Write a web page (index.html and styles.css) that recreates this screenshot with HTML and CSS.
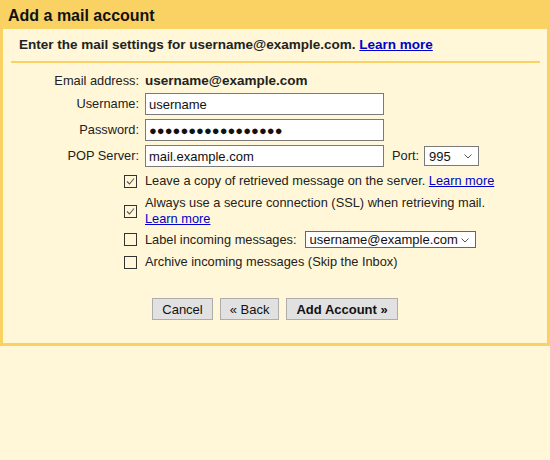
FILE: index.html
```html
<!DOCTYPE html>
<html>
<head>
    <title>Add a mail account</title>
    <link rel="stylesheet" href="styles.css">
</head>
<body>
    <div class="dialog">
        <h1 class="dialog-title">Add a mail account</h1>
        <div class="dialog-body">
            <div class="intro">Enter the mail settings for username@example.com. <a href="#">Learn more</a></div>
            <hr class="rule">

            <div class="form">
                <div class="label">Email address:</div>
                <div class="value strong">username@example.com</div>

                <label class="label" for="username">Username:</label>
                <div class="value"><input class="field" id="username" type="text" value="username"></div>

                <label class="label" for="password">Password:</label>
                <div class="value"><input class="field dots" id="password" type="text" value="●●●●●●●●●●●●●●●●●"></div>

                <label class="label" for="server">POP Server:</label>
                <div class="value inline">
                    <input class="field" id="server" type="text" value="mail.example.com">
                    <label class="port-label" for="port">Port:</label>
                    <div class="select port">
                        <select id="port"><option>995</option><option>110</option></select>
                        <svg class="chevron" width="8" height="5" viewBox="0 0 8 5"><path d="M0.5 0.5 L4 4 L7.5 0.5" fill="none" stroke="#555" stroke-width="1"/></svg>
                    </div>
                </div>

                <!-- options -->
                <div class="box"><svg class="check" width="13" height="13" viewBox="0 0 13 13"><rect x="0.5" y="0.5" width="12" height="12" fill="none" stroke="#333"/><path d="M3 6.5 L5.5 9 L10 3.5" fill="none" stroke="#555" stroke-width="1.1"/></svg></div>
                <div class="option">Leave a copy of retrieved message on the server. <a href="#">Learn more</a></div>

                <div class="box"><svg class="check" width="13" height="13" viewBox="0 0 13 13"><rect x="0.5" y="0.5" width="12" height="12" fill="none" stroke="#333"/><path d="M3 6.5 L5.5 9 L10 3.5" fill="none" stroke="#555" stroke-width="1.1"/></svg></div>
                <div class="option wrap">Always use a secure connection (SSL) when retrieving mail.<br><a href="#">Learn more</a></div>

                <div class="box"><svg class="check" width="13" height="13" viewBox="0 0 13 13"><rect x="0.5" y="0.5" width="12" height="12" fill="none" stroke="#333"/></svg></div>
                <div class="option inline tight">
                    Label incoming messages:
                    <div class="select label-select">
                        <select><option>username@example.com</option></select>
                        <svg class="chevron" width="8" height="5" viewBox="0 0 8 5"><path d="M0.5 0.5 L4 4 L7.5 0.5" fill="none" stroke="#555" stroke-width="1"/></svg>
                    </div>
                </div>

                <div class="box"><svg class="check" width="13" height="13" viewBox="0 0 13 13"><rect x="0.5" y="0.5" width="12" height="12" fill="none" stroke="#333"/></svg></div>
                <div class="option">Archive incoming messages (Skip the Inbox)</div>
            </div>

            <div class="actions">
                <button>Cancel</button>
                <button>&laquo; Back</button>
                <button class="primary">Add Account &raquo;</button>
            </div>
        </div>
    </div>
</body>
</html>
```

FILE: styles.css
```css
body {
    margin: 0;
    font-family: "Liberation Sans", Arial, sans-serif;
    font-size: 12.8px;
    color: #222;
    background: #fff7d7;
}
a {
    color: #00c;
}
.dialog {
    background: #fad163;
    padding: 0 3px 3px;
}
.dialog-title {
    margin: 0;
    height: 29px;
    line-height: 31px;
    padding-left: 5px;
    font-size: 16px;
    font-weight: bold;
    color: #111;
}
.dialog-body {
    background: #fff7d7;
    height: 314px;
    box-sizing: border-box;
    padding-top: 8px;
}
.intro {
    padding-left: 16px;
    line-height: 16px;
    font-size: 13.5px;
    font-weight: bold;
}
.rule {
    height: 2px;
    margin: 8px 7px 0 8px;
    border: none;
    background: #fad163;
}
.form {
    display: grid;
    grid-template-columns: 136px 1fr;
    column-gap: 6px;
    row-gap: 4px;
    align-items: center;
    margin-top: 10px;
    padding-right: 8px;
    line-height: 16px;
}
.label {
    text-align: right;
}
.strong {
    font-size: 13.5px;
    font-weight: bold;
}
.inline {
    display: flex;
    align-items: center;
}
.field {
    width: 239px;
    height: 22px;
    box-sizing: border-box;
    margin: 0;
    padding: 0 3px;
    border: 1px solid #7a7a7a;
    background: white;
    font-family: inherit;
    font-size: 13px;
    color: #111;
}
.port-label {
    margin-left: 8px;
}
.select {
    position: relative;
    margin-left: 5px;
}
.select select {
    appearance: none;
    display: block;
    box-sizing: border-box;
    margin: 0;
    padding: 0 0 0 4px;
    border: 1px solid #7a7a7a;
    border-radius: 0;
    background: white;
    font-family: inherit;
    font-size: 13px;
    color: #111;
}
.port select {
    width: 55px;
    height: 20px;
}
.label-select {
    margin-left: 8px;
}
.label-select select {
    width: 171px;
    height: 17px;
    line-height: 15px;
    border-color: #666;
}
.chevron {
    position: absolute;
    right: 7px;
    top: 50%;
    margin-top: -2px;
}
.box {
    justify-self: end;
    margin-right: 2px;
    height: 13px;
}
.check {
    display: block;
}
.option {
    padding: 2px 0;
}
.option.wrap {
    padding: 0;
}
.option.tight {
    padding: 0;
}
.actions {
    display: flex;
    justify-content: center;
    gap: 7px;
    margin-top: 26px;
}
button {
    height: 22px;
    padding: 0 9px;
    border: 1px solid #adadad;
    border-radius: 0;
    background: #e1e1e1;
    font-family: inherit;
    font-size: 13px;
    color: #111;
}
.primary {
    font-weight: bold;
}
```
